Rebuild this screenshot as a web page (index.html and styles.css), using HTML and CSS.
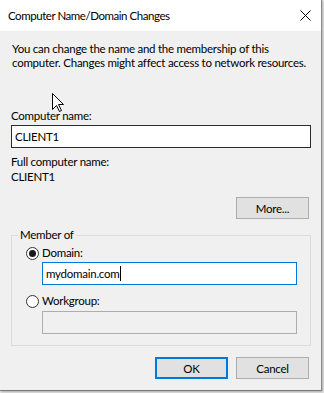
FILE: index.html
```html
<!DOCTYPE html>
<html lang="en">
<head>
    <meta charset="UTF-8">
    <meta name="viewport" content="width=device-width, initial-scale=1.0">
    <title>Computer Name/Domain Changes</title>
    <link rel="stylesheet" href="styles.css">
</head>
<body>
    <div class="dialog">
        <div class="titlebar">
            <span class="title">Computer Name/Domain Changes</span>
            <svg class="close" width="11" height="11" viewBox="0 0 11 11">
                <path d="M0.5 0.5 L10.5 10.5 M10.5 0.5 L0.5 10.5" stroke="#000" stroke-width="1" fill="none"/>
            </svg>
        </div>

        <div class="content">
            <p class="intro">
                You can change the name and the membership of this<br>
                computer. Changes might affect access to network resources.
            </p>

            <div class="field-label first">Computer name:</div>
            <div class="textbox">CLIENT1</div>

            <div class="field-label">Full computer name:</div>
            <div class="value">CLIENT1</div>

            <div class="more-row">
                <button class="btn">More...</button>
            </div>

            <fieldset class="group">
                <legend>Member of</legend>
                <div class="radio-row">
                    <span class="radio checked"></span>Domain:
                </div>
                <div class="textbox inset focus">mydomain.com<span class="caret"></span></div>
                <div class="radio-row second">
                    <span class="radio"></span>Workgroup:
                </div>
                <div class="textbox inset disabled"></div>
            </fieldset>

            <div class="actions">
                <button class="btn default">OK</button>
                <button class="btn">Cancel</button>
            </div>
        </div>

        <svg class="cursor" width="13" height="19" viewBox="0 0 13 19">
            <path d="M0.5 0.5 L0.5 16.5 L4.5 12.5 L7.5 18.5 L9.5 17.5 L6.5 11.5 L11.5 11.5 Z" fill="#fff" stroke="#000" stroke-width="1"/>
        </svg>
    </div>
</body>
</html>
```

FILE: styles.css
```css
* {
    margin: 0;
    padding: 0;
    box-sizing: border-box;
}

body {
    font-family: Lato, 'Liberation Sans', Arial, sans-serif;
    font-size: 11.5px;
    letter-spacing: -0.25px;
    color: #000;
    background: #e6e6e6;
    width: 324px;
    height: 393px;
    overflow: hidden;
}

.dialog {
    position: relative;
    width: 322px;
    height: 391px;
    background: #f0f0f0;
    border-right: 1px solid #8a8a8a;
    border-bottom: 1px solid #7a7a7a;
    box-shadow: 1px 1px 2px rgba(0, 0, 0, 0.25);
}

.titlebar {
    height: 31px;
    background: #fff;
    display: flex;
    align-items: center;
    justify-content: space-between;
    padding: 0 10px 0 8px;
}

.title {
    font-size: 11.5px;
    letter-spacing: -0.45px;
}

.close {
    display: block;
}

.content {
    padding: 11px 11px 0 11px;
}

.intro {
    line-height: 14px;
    padding-left: 1px;
    white-space: nowrap;
}

.field-label {
    line-height: 14px;
    margin-top: 7px;
}

.field-label.first {
    margin-top: 39px;
    margin-bottom: 2px;
}

.value {
    line-height: 14px;
    margin-top: 1px;
}

.textbox {
    width: 300px;
    height: 23px;
    border: 1px solid #2b2b2b;
    background: #fff;
    padding-left: 3px;
    display: flex;
    align-items: center;
}

.textbox.inset {
    width: 255px;
    margin-left: 16px;
}

.textbox.focus {
    border-color: #0078d7;
    margin-top: 2px;
}

.textbox.disabled {
    border-color: #adadad;
    background: #f0f0f0;
    margin-top: 3px;
}

.caret {
    display: inline-block;
    width: 1px;
    height: 15px;
    background: #000;
    margin-left: 1px;
}

.more-row {
    display: flex;
    justify-content: flex-end;
    margin-top: 13px;
    padding-right: 1px;
}

.btn {
    font-family: inherit;
    font-size: 11.5px;
    letter-spacing: -0.25px;
    color: #000;
    width: 73px;
    height: 22px;
    background: #e1e1e1;
    border: 1px solid #adadad;
}

.btn.default {
    border: 2px solid #0078d7;
}

.group {
    width: 300px;
    margin-top: 9px;
    border: 1px solid #dcdcdc;
    padding: 0 0 11px 14px;
}

.group legend {
    line-height: 14px;
    padding: 0 2px;
    margin-left: -8px;
}

.radio-row {
    display: flex;
    align-items: center;
    line-height: 14px;
    margin-top: 4px;
}

.radio-row.second {
    margin-top: 9px;
}

.radio {
    width: 13px;
    height: 13px;
    border: 1px solid #333;
    border-radius: 50%;
    background: #fff;
    margin-right: 3px;
    display: flex;
    align-items: center;
    justify-content: center;
}

.radio.checked::after {
    content: '';
    width: 7px;
    height: 7px;
    border-radius: 50%;
    background: #1a1a1a;
}

.actions {
    display: flex;
    justify-content: flex-end;
    gap: 8px;
    margin-top: 11px;
    padding-right: 1px;
}

.cursor {
    position: absolute;
    left: 52px;
    top: 93px;
}
```
